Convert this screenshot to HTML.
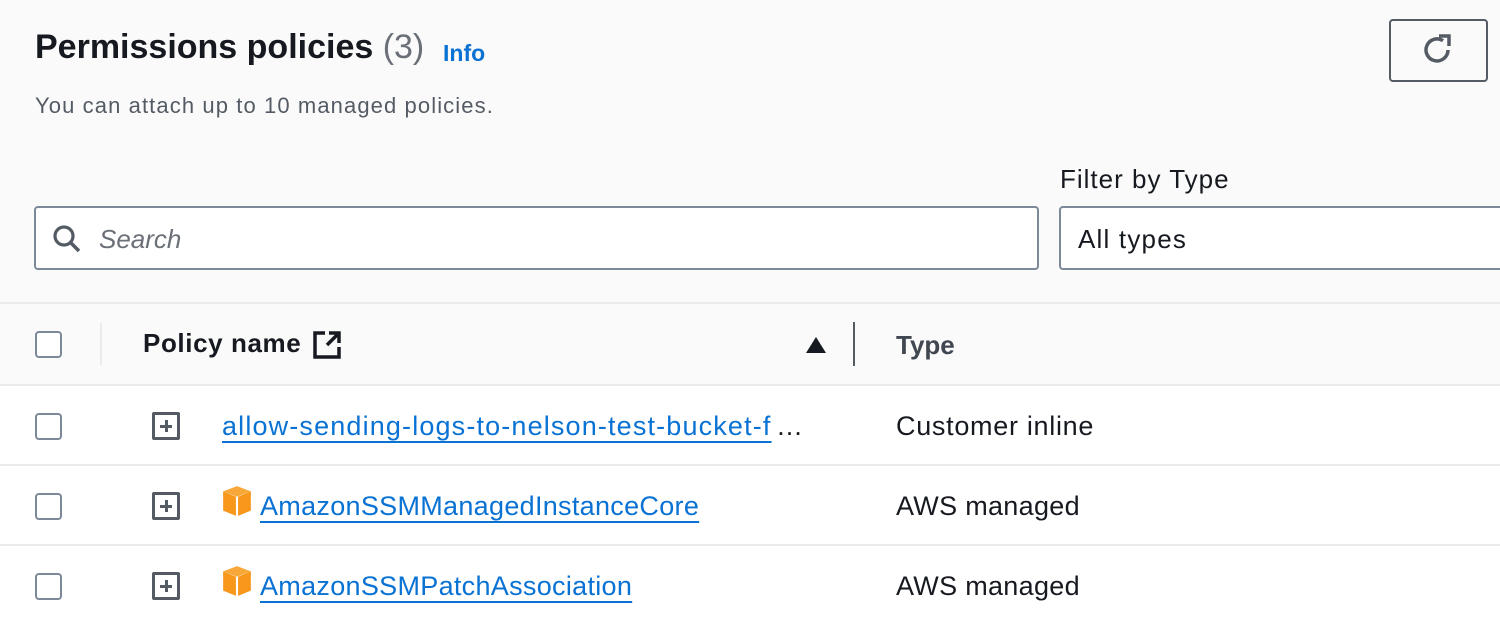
<!DOCTYPE html>
<html><head><style>
*{box-sizing:border-box;margin:0;padding:0}
body{width:1500px;height:624px;overflow:hidden;background:#fafafa;font-family:"Liberation Sans",sans-serif;color:#16191f;position:relative}
.a{position:absolute;white-space:nowrap}
.cb{position:absolute;left:35px;width:27px;height:27px;border:2px solid #7d8998;border-radius:4px;background:#fff}
.ex{position:absolute;left:152px;width:28px;height:28px;border:3px solid #545b64;border-radius:2px;background:#fff}
.ex:before{content:"";position:absolute;left:5px;top:9.5px;width:12px;height:3px;background:#545b64}
.ex:after{content:"";position:absolute;left:9.5px;top:5px;width:3px;height:12px;background:#545b64}
.row{position:absolute;left:0;width:1500px;height:80px;background:#fff;border-top:2px solid #e9ebed}
.lk{color:#0972d3;font-size:27px;text-decoration:underline;text-underline-offset:6px;text-decoration-thickness:2px}
.ty{left:896px;font-size:27px}
</style></head><body>
<div class="a" style="left:35px;top:28px;font-size:34px;font-weight:bold">Permissions policies <span style="font-weight:normal;color:#6b7078">(3)</span></div>
<div class="a" style="left:443px;top:40px;font-size:23px;font-weight:bold;color:#0972d3">Info</div>
<div class="a" style="left:35px;top:93px;font-size:22px;color:#545b64;letter-spacing:1.1px">You can attach up to 10 managed policies.</div>
<div class="a" style="left:1389px;top:19px;width:99px;height:63px;border:2px solid #545b64;border-radius:4px;background:#fafafa"></div>
<svg class="a" style="left:1420px;top:32px" width="36" height="36" viewBox="0 0 36 36"><path d="M28 18a11 11 0 1 1-5-9.3" fill="none" stroke="#545b64" stroke-width="3.5"/><path d="M19 4h10v10" fill="none" stroke="#545b64" stroke-width="3.5"/></svg>
<div class="a" style="left:1060px;top:164px;font-size:26px;letter-spacing:1px">Filter by Type</div>
<div class="a" style="left:34px;top:206px;width:1005px;height:64px;border:2px solid #7d8998;border-radius:4px;background:#fff"></div>
<svg class="a" style="left:52px;top:224px" width="30" height="30" viewBox="0 0 30 30"><circle cx="12" cy="12" r="9" fill="none" stroke="#545b64" stroke-width="3.2"/><path d="M19 19l8 8" stroke="#545b64" stroke-width="3.5"/></svg>
<div class="a" style="left:99px;top:224px;font-size:26px;font-style:italic;color:#6b7078">Search</div>
<div class="a" style="left:1059px;top:206px;width:460px;height:64px;border:2px solid #7d8998;border-radius:4px;background:#fff"></div>
<div class="a" style="left:1078px;top:224px;font-size:26px;letter-spacing:1.2px">All types</div>
<div class="a" style="left:0;top:302px;width:1500px;height:84px;border-top:2px solid #e9ebed;background:#fafafa"></div>
<div class="cb" style="top:331px"></div>
<div class="a" style="left:100px;top:323px;width:2px;height:42px;background:#e9ebed"></div>
<div class="a" style="left:143px;top:328px;font-size:26px;font-weight:bold;letter-spacing:0.6px">Policy name</div>
<svg class="a" style="left:312px;top:330px" width="30" height="30" viewBox="0 0 30 30"><path d="M13 3H3v24h24V17" fill="none" stroke="#16191f" stroke-width="3.5"/><path d="M15 15L26 4M17 3h10v10" fill="none" stroke="#16191f" stroke-width="3.5"/></svg>
<svg class="a" style="left:805px;top:336px" width="22" height="18"><path d="M1 17L11 1l10 16z" fill="#16191f"/></svg>
<div class="a" style="left:853px;top:322px;width:2px;height:44px;background:#545b64"></div>
<div class="a" style="left:896px;top:330px;font-size:26px;font-weight:bold;color:#414750">Type</div>
<div class="row" style="top:384px"></div>
<div class="row" style="top:464px"></div>
<div class="row" style="top:544px"></div>
<div class="cb" style="top:413px"></div><div class="ex" style="top:412px"></div>
<div class="a lk" style="left:222px;top:411px;letter-spacing:1.15px">allow-sending-logs-to-nelson-test-bucket-f</div><div class="a" style="left:776px;top:411px;font-size:27px">…</div>
<div class="a ty" style="top:411px;letter-spacing:0.7px">Customer inline</div>
<div class="cb" style="top:493px"></div><div class="ex" style="top:492px"></div>
<svg class="a" style="left:221px;top:485px" width="32" height="32" viewBox="0 0 30 30"><path d="M2 6l13-5 13 5-13 5z" fill="#f7a838"/><path d="M2 6l12 5v18L2 24z" fill="#f7981d"/><path d="M28 6l-12 5v18l12-5z" fill="#f7981d"/></svg>
<div class="a lk" style="left:260px;top:491px;letter-spacing:0.3px">AmazonSSMManagedInstanceCore</div>
<div class="a ty" style="top:491px;letter-spacing:0.3px">AWS managed</div>
<div class="cb" style="top:573px"></div><div class="ex" style="top:572px"></div>
<svg class="a" style="left:221px;top:565px" width="32" height="32" viewBox="0 0 30 30"><path d="M2 6l13-5 13 5-13 5z" fill="#f7a838"/><path d="M2 6l12 5v18L2 24z" fill="#f7981d"/><path d="M28 6l-12 5v18l12-5z" fill="#f7981d"/></svg>
<div class="a lk" style="left:260px;top:571px;letter-spacing:0.3px">AmazonSSMPatchAssociation</div>
<div class="a ty" style="top:571px;letter-spacing:0.3px">AWS managed</div>
</body></html>
